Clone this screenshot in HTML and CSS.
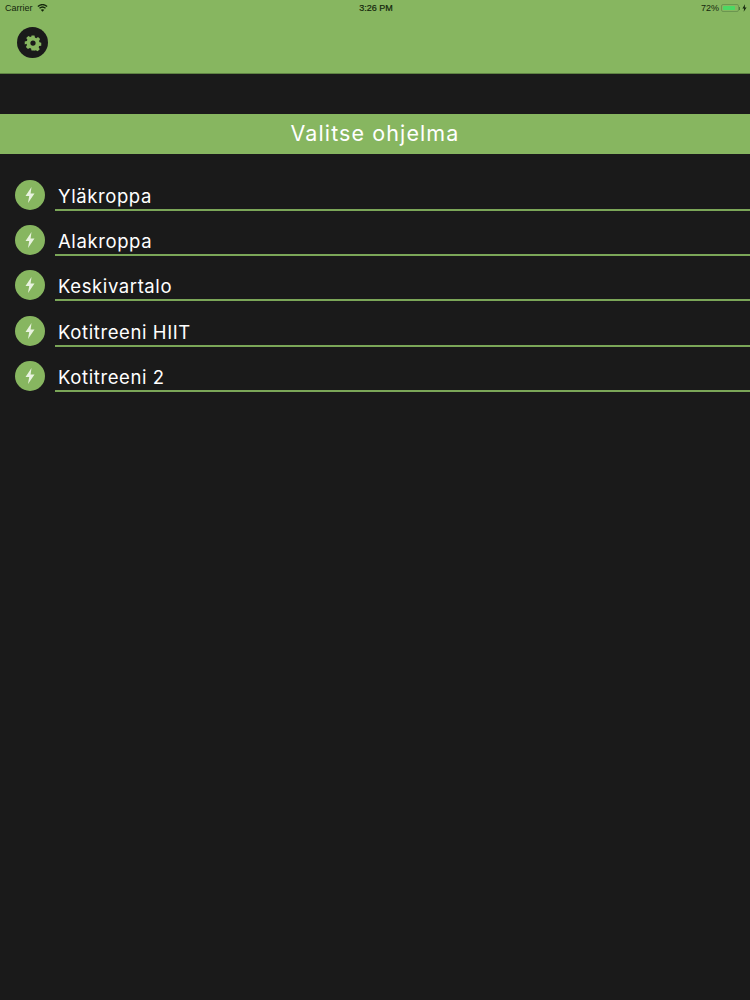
FILE: index.html
```html
<!DOCTYPE html>
<html lang="fi">
<head>
<meta charset="utf-8">
<title>Valitse ohjelma</title>
<link rel="stylesheet" href="styles.css">
</head>
<body>
<header class="topbar">
  <div class="status">
    <div class="status-left">
      <span>Carrier</span>
      <svg class="wifi" viewBox="0 0 12 9" width="11" height="8"><path d="M6 8.800 4 6.600C5.200 5.500 6.800 5.500 8 6.600Z" fill="#14260c"/><path d="M2.600 4.900C4.600 3.100 7.400 3.100 9.400 4.900M.8 2.900C3.900.2 8.100.2 11.200 2.900" fill="none" stroke="#14260c" stroke-width="1.500"/></svg>
    </div>
    <div class="status-time">3:26 PM</div>
    <div class="status-right">
      <span>72%</span>
      <span class="battery"><span class="battery-fill"></span></span>
      <span class="battery-cap"></span>
      <svg viewBox="0 0 6 9" width="5" height="8"><path d="M3.600 0 0.500 5H2.600L2 9 5.500 3.800H3.300Z" fill="#14260c"/></svg>
    </div>
  </div>
  <div class="toolbar">
    <button class="gear" aria-label="Asetukset">
      <svg viewBox="0 0 24 24" width="18" height="18"><path fill="#87b660" fill-rule="evenodd" d="M10 2h4l.6 2.800 1.700.7 2.400-1.500 2.800 2.800-1.500 2.400.7 1.700 2.300.6v4l-2.800.6-.7 1.700 1.500 2.400-2.800 2.800-2.400-1.500-1.700.7L14 22h-4l-.6-2.800-1.700-.7-2.400 1.500-2.800-2.800 1.500-2.400-.7-1.700L1 14v-4l2.800-.6.7-1.700L3 5.300 5.800 2.500 8.200 4l1.700-.7ZM12 8.500a3.500 3.500 0 1 0 0 7 3.500 3.500 0 0 0 0-7Z"/></svg>
    </button>
  </div>
</header>
<section class="title-bar"><h1>Valitse ohjelma</h1></section>
<ul class="list">
  <li class="row"><span class="bolt"><svg viewBox="0 0 10 16" width="10" height="16"><path d="M6.500 0 0.500 9H4.200L3 16 9.500 6.500H5.600Z" fill="#e9f3e0"/></svg></span><span class="label">Yläkroppa</span></li>
  <li class="row"><span class="bolt"><svg viewBox="0 0 10 16" width="10" height="16"><path d="M6.500 0 0.500 9H4.200L3 16 9.500 6.500H5.600Z" fill="#e9f3e0"/></svg></span><span class="label">Alakroppa</span></li>
  <li class="row"><span class="bolt"><svg viewBox="0 0 10 16" width="10" height="16"><path d="M6.500 0 0.500 9H4.200L3 16 9.500 6.500H5.600Z" fill="#e9f3e0"/></svg></span><span class="label">Keskivartalo</span></li>
  <li class="row"><span class="bolt"><svg viewBox="0 0 10 16" width="10" height="16"><path d="M6.500 0 0.500 9H4.200L3 16 9.500 6.500H5.600Z" fill="#e9f3e0"/></svg></span><span class="label">Kotitreeni HIIT</span></li>
  <li class="row"><span class="bolt"><svg viewBox="0 0 10 16" width="10" height="16"><path d="M6.500 0 0.500 9H4.200L3 16 9.500 6.500H5.600Z" fill="#e9f3e0"/></svg></span><span class="label">Kotitreeni 2</span></li>
</ul>
</body>
</html>
```
FILE: styles.css
```css
* { box-sizing: border-box; }
html, body { margin: 0; height: 100%; }
body {
  background: #1a1a1a;
  font-family: Inter, "Noto Sans", sans-serif;
  color: #fff;
  overflow: hidden;
}
.topbar { height: 74px; background: #87b660; border-bottom: 1px solid #5f8443; }
.status {
  height: 15px;
  padding: 1px 3px 0 5px;
  display: grid;
  grid-template-columns: 1fr auto 1fr;
  align-items: center;
  font-family: "Liberation Sans", sans-serif;
  font-size: 9px;
  color: #14260c;
}
.status-left { display: flex; align-items: center; gap: 4px; }
.status-time { font-weight: 400; -webkit-text-stroke: .2px #14260c; }
.status-right { display: flex; align-items: center; justify-content: flex-end; }
.battery {
  width: 18px; height: 8px; margin-left: 2px; padding: 1px;
  border: 1px solid #6b9650; border-radius: 2px; display: block;
}
.battery-fill { display: block; width: 86%; height: 100%; background: #4cd964; border-radius: 1px; }
.battery-cap { width: 1px; height: 3px; background: #4f7a38; margin-right: 2px; }
.toolbar { padding: 12px 0 0 17px; }
.gear {
  width: 31px; height: 31px; padding: 0; border: 0; border-radius: 50%;
  background: #1a1a1a; display: flex; align-items: center; justify-content: center;
}
.title-bar {
  margin-top: 40px;
  height: 40px;
  background: #87b660;
  display: flex; align-items: center; justify-content: center;
}
.title-bar h1 { margin: 0 0 1px; font-size: 21.500px; font-weight: 400; line-height: 1; letter-spacing: 1.100px; color: #fff; }
.list { list-style: none; margin: 0; padding: 25.800px 0 0 15px; display: flex; flex-direction: column; gap: 15px; }
.row { display: flex; height: 30.300px; gap: 10px; }
.bolt {
  flex: none; width: 30px; height: 30px; border-radius: 50%; padding-right: 1px;
  background: #87b660; display: flex; align-items: center; justify-content: center;
}
.label {
  flex: 1;
  height: 31px;
  border-bottom: 2px solid #7ba658;
  padding: 4px 0 0 3px;
  font-size: 18.500px;
  line-height: 24px;
  font-weight: 400;
  letter-spacing: .6px;
}
```
